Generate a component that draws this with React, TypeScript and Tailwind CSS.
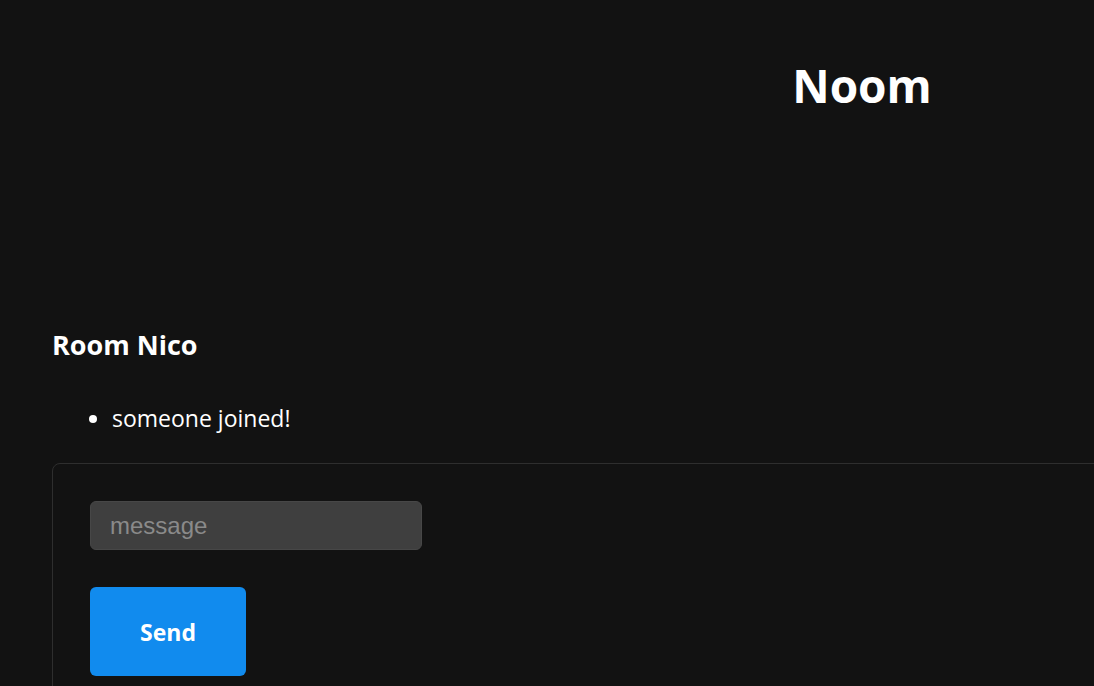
export default function App() {
  return (
    <div className="w-full h-[686px] overflow-hidden bg-[#121212] text-white">
      <div className="w-[1724px] font-['Open_Sans',sans-serif]">
        {/* Header */}
        <header className="pt-[62px] h-[328px] text-center">
          <h1 className="text-[46px] font-bold leading-none">Noom</h1>
        </header>

        <main className="px-[52px]">
          <h3 className="text-[27px] font-bold leading-tight">Room Nico</h3>
          <ul className="mt-[39px] pl-[60px] list-disc text-[23px]">
            <li>someone joined!</li>
          </ul>
          <form className="mt-[28px] border border-[#2e2e2e] rounded-lg p-[37px]">
            <input
              placeholder="message"
              className="block w-[332px] h-[49px] rounded-md bg-[#3f3f3f] border border-[#474747] px-[19px] text-[24px] font-['Liberation_Sans',sans-serif] placeholder:text-[#8a8a8a] outline-none"
            />
            <button
              type="button"
              className="mt-[37px] w-[156px] h-[89px] rounded-md bg-[#118bee] text-white text-[23px] font-bold"
            >
              Send
            </button>
          </form>
        </main>
      </div>
    </div>
  );
}
